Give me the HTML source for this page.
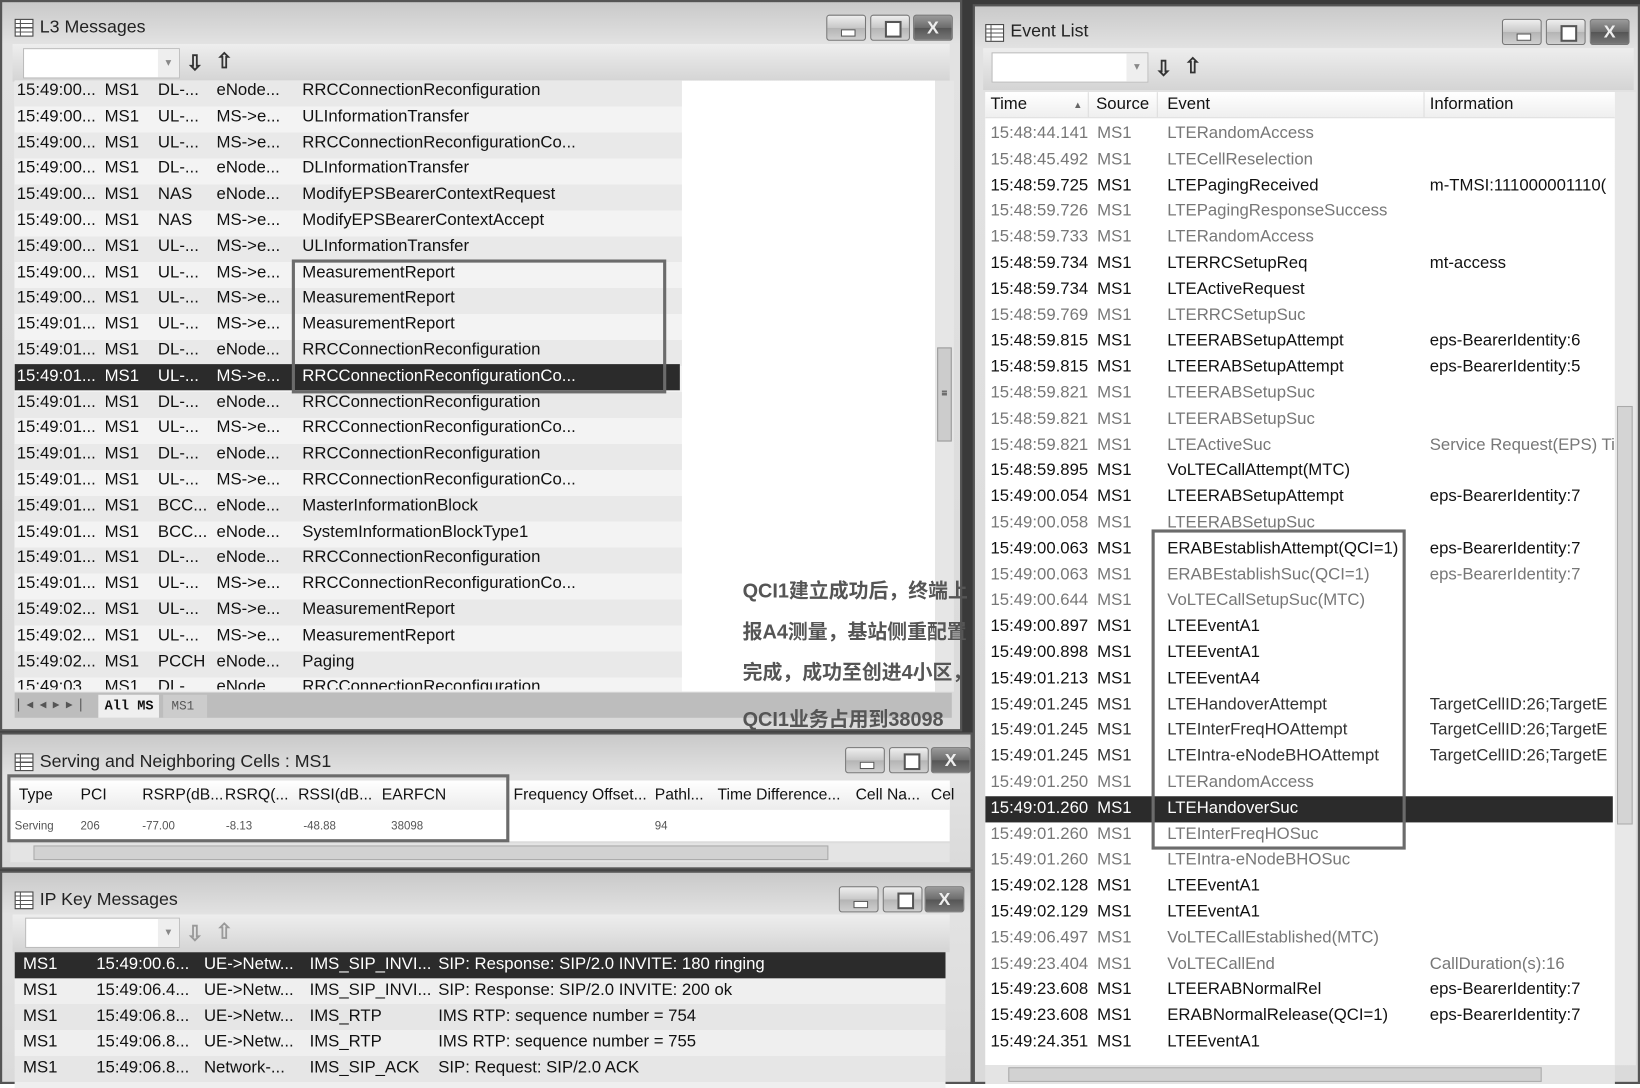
<!DOCTYPE html>
<html><head><meta charset="utf-8"><style>
*{margin:0;padding:0;box-sizing:border-box}
html,body{width:1640px;height:1084px;overflow:hidden;background:#fff}
#w{position:absolute;left:0;top:0;width:1568px;height:1036px;transform:scale(1.04592,1.04633);transform-origin:0 0;background:#3a3a3a;font-family:"Liberation Sans",sans-serif;font-size:16px;color:#111}
.a{position:absolute}
.pan{position:absolute;background:linear-gradient(#c9c9c9,#e2e2e2 40px,#dadada);border:2px solid #555}
.tt{position:absolute;font-size:17px;color:#222;white-space:nowrap}
.ico{position:absolute;width:18px;height:17px;border:1px solid #444;background:repeating-linear-gradient(#fff 0 3px,#555 3px 4px);}
.ico:after{content:"";position:absolute;left:4px;top:0;bottom:0;width:1px;background:#555}
.btn{position:absolute;width:38px;height:25px;border:1px solid #777;border-radius:3px;background:linear-gradient(#eee,#c8c8c8 50%,#b4b4b4 51%,#cfcfcf)}
.btn.x{background:linear-gradient(#9a9a9a,#6c6c6c 50%,#555 51%,#777);color:#eee;font-weight:bold;font-size:17px;text-align:center;line-height:23px}
.btn.mn:after{content:"";position:absolute;left:13px;top:13px;width:12px;height:5px;background:#fff;border:1px solid #555}
.btn.mx:after{content:"";position:absolute;left:13px;top:5px;width:12px;height:12px;background:#fff;border:2px solid #555}
.cb{position:absolute;height:29px;background:#fff;border:1px solid #bbb}
.cb:after{content:"▾";position:absolute;right:0;top:0;width:20px;height:100%;background:#eee;color:#888;font-size:11px;text-align:center;line-height:27px}
.ar{position:absolute;font-size:20px;color:#333;font-weight:bold}
.r{position:absolute;left:0;height:24.8px;line-height:24.8px;white-space:nowrap}
.r span{position:absolute;top:0}
.sel{background:#2b2b2b;color:#fff}
.g{color:#777}
.box{position:absolute;border:3px solid #6b6b6b}
.ann{position:absolute;font-family:"Liberation Sans","Noto Sans CJK SC",sans-serif;font-weight:bold;color:#555;font-size:19px;white-space:nowrap}
</style></head><body><div id="w">

<!-- L3 Messages -->
<div class="pan" style="left:0;top:0;width:920px;height:699px">
<div class="ico" style="left:12px;top:16px"></div>
<div class="tt" style="left:36px;top:14px">L3 Messages</div>
<div class="btn mn" style="left:788px;top:12px"></div><div class="btn mx" style="left:830px;top:12px"></div><div class="btn x" style="left:871px;top:12px">X</div>
<div class="a" style="left:10px;top:40px;width:896px;height:36px;background:linear-gradient(#eee,#d4d4d4)"></div>
<div class="cb" style="left:20px;top:44px;width:150px"></div>
<div class="ar" style="left:176px;top:46px">⇩</div><div class="ar" style="left:204px;top:44px">⇧</div>
<div class="a" style="left:12px;top:75px;width:880px;height:584px;background:#fff;overflow:hidden">
<div class="a" style="left:0;top:0;width:638px;height:584px;background:repeating-linear-gradient(#e9e9e9 0 24.8px,#f3f3f3 24.8px 49.6px)"></div>
<div id="l3"></div>
</div>
<div class="a" style="left:892px;top:75px;width:18px;height:584px;background:#e6e6e6"><div class="a" style="left:2px;top:255px;width:14px;height:90px;background:#ccc;border:1px solid #999;font-size:10px;text-align:center;line-height:88px">≡</div></div>
<div class="a" style="left:12px;top:660px;width:896px;height:24px;background:#bdbdbd"></div>
<div class="a" style="left:14px;top:663px;font-size:13px;color:#555;letter-spacing:6px">|◂◂▸▸|</div>
<div class="a" style="left:92px;top:662px;width:58px;height:22px;background:#efefef;font-family:'Liberation Mono',monospace;font-size:13px;font-weight:bold;line-height:22px;padding-left:6px">All MS</div>
<div class="a" style="left:154px;top:662px;width:42px;height:22px;background:#ccc;font-family:'Liberation Mono',monospace;font-size:12px;line-height:22px;padding-left:8px;color:#555">MS1</div>
</div>

<!-- Serving -->
<div class="pan" style="left:0;top:700px;width:930px;height:131px">
<div class="ico" style="left:12px;top:18px"></div>
<div class="tt" style="left:36px;top:16px">Serving and Neighboring Cells : MS1</div>
<div class="btn mn" style="left:806px;top:12px"></div><div class="btn mx" style="left:848px;top:12px"></div><div class="btn x" style="left:888px;top:12px">X</div>
<div class="a" style="left:8px;top:44px;width:898px;height:58px;background:#fff"></div>
<div class="a" style="left:8px;top:44px;width:898px;height:28px;background:linear-gradient(#fff,#ececec);font-size:15px;line-height:28px;white-space:nowrap">
<span class="a" style="left:8px">Type</span><span class="a" style="left:67px">PCI</span><span class="a" style="left:126px">RSRP(dB...</span><span class="a" style="left:205px">RSRQ(...</span><span class="a" style="left:275px">RSSI(dB...</span><span class="a" style="left:355px">EARFCN</span><span class="a" style="left:481px">Frequency Offset...</span><span class="a" style="left:616px">Pathl...</span><span class="a" style="left:676px">Time Difference...</span><span class="a" style="left:808px">Cell Na...</span><span class="a" style="left:880px">Cel</span></div>
<div class="a" style="left:8px;top:76px;width:898px;height:24px;font-size:11px;color:#555;line-height:24px;white-space:nowrap">
<span class="a" style="left:4px">Serving</span><span class="a" style="left:67px">206</span><span class="a" style="left:126px">-77.00</span><span class="a" style="left:206px">-8.13</span><span class="a" style="left:280px">-48.88</span><span class="a" style="left:364px">38098</span><span class="a" style="left:616px">94</span></div>
<div class="a" style="left:8px;top:104px;width:898px;height:18px;background:#e4e4e4"><div class="a" style="left:22px;top:2px;width:760px;height:14px;background:#d2d2d2;border:1px solid #aaa"></div></div>
</div>
<div class="box" style="left:7px;top:740px;width:480px;height:65px"></div>

<!-- IP Key -->
<div class="pan" style="left:0;top:832px;width:930px;height:204px">
<div class="ico" style="left:12px;top:18px"></div>
<div class="tt" style="left:36px;top:16px">IP Key Messages</div>
<div class="btn mn" style="left:800px;top:13px"></div><div class="btn mx" style="left:842px;top:13px"></div><div class="btn x" style="left:882px;top:13px">X</div>
<div class="a" style="left:10px;top:40px;width:896px;height:36px;background:linear-gradient(#eee,#d4d4d4)"></div>
<div class="cb" style="left:22px;top:43px;width:148px"></div>
<div class="ar" style="left:176px;top:46px;color:#999">⇩</div><div class="ar" style="left:204px;top:44px;color:#999">⇧</div>
<div class="a" style="left:12px;top:76px;width:890px;height:130px;background:repeating-linear-gradient(#e6e6e6 0 24.8px,#efefef 24.8px 49.6px);overflow:hidden">
<div class="r sel" style="top:0;width:890px"><span style="left:8px">MS1</span><span style="left:78px">15:49:00.6...</span><span style="left:181px">UE-&gt;Netw...</span><span style="left:282px">IMS_SIP_INVI...</span><span style="left:405px">SIP: Response: SIP/2.0 INVITE: 180 ringing</span></div>
<div class="r" style="top:24.8px"><span style="left:8px">MS1</span><span style="left:78px">15:49:06.4...</span><span style="left:181px">UE-&gt;Netw...</span><span style="left:282px">IMS_SIP_INVI...</span><span style="left:405px">SIP: Response: SIP/2.0 INVITE: 200 ok</span></div>
<div class="r" style="top:49.6px"><span style="left:8px">MS1</span><span style="left:78px">15:49:06.8...</span><span style="left:181px">UE-&gt;Netw...</span><span style="left:282px">IMS_RTP</span><span style="left:405px">IMS RTP: sequence number = 754</span></div>
<div class="r" style="top:74.4px"><span style="left:8px">MS1</span><span style="left:78px">15:49:06.8...</span><span style="left:181px">UE-&gt;Netw...</span><span style="left:282px">IMS_RTP</span><span style="left:405px">IMS RTP: sequence number = 755</span></div>
<div class="r" style="top:99.2px"><span style="left:8px">MS1</span><span style="left:78px">15:49:06.8...</span><span style="left:181px">Network-...</span><span style="left:282px">IMS_SIP_ACK</span><span style="left:405px">SIP: Request: SIP/2.0 ACK</span></div>
</div>
</div>

<!-- Event List -->
<div class="pan" style="left:930px;top:4px;width:638px;height:1032px">
<div class="ico" style="left:10px;top:17px"></div>
<div class="tt" style="left:34px;top:14px">Event List</div>
<div class="btn mn" style="left:504px;top:12px"></div><div class="btn mx" style="left:546px;top:12px"></div><div class="btn x" style="left:588px;top:12px">X</div>
<div class="a" style="left:8px;top:40px;width:622px;height:40px;background:linear-gradient(#eee,#d4d4d4)"></div>
<div class="cb" style="left:16px;top:44px;width:150px"></div>
<div class="ar" style="left:172px;top:47px">⇩</div><div class="ar" style="left:200px;top:45px">⇧</div>
<div class="a" style="left:10px;top:82px;width:602px;height:930px;background:#fff;overflow:hidden">
<div class="a" style="left:0;top:0;width:602px;height:25px;background:linear-gradient(#fff,#efefef);border-bottom:1px solid #ddd;white-space:nowrap;line-height:24px">
<span class="a" style="left:5px">Time</span><span class="a" style="left:84px;font-size:9px;color:#666">▲</span><span class="a" style="left:98px;top:0;width:1px;height:24px;background:#ddd"></span><span class="a" style="left:106px">Source</span><span class="a" style="left:164px;top:0;width:1px;height:24px;background:#ddd"></span><span class="a" style="left:174px">Event</span><span class="a" style="left:419px;top:0;width:1px;height:24px;background:#ddd"></span><span class="a" style="left:425px">Information</span></div>
<div id="ev" class="a" style="left:0;top:28px;width:600px">
<div class="r g" style="top:0"><span style="left:5px">15:48:44.141</span><span style="left:107px">MS1</span><span style="left:174px">LTERandomAccess</span></div>
<div class="r g" style="top:24.8px"><span style="left:5px">15:48:45.492</span><span style="left:107px">MS1</span><span style="left:174px">LTECellReselection</span></div>
<div class="r" style="top:49.6px"><span style="left:5px">15:48:59.725</span><span style="left:107px">MS1</span><span style="left:174px">LTEPagingReceived</span><span style="left:425px">m-TMSI:111000001110(</span></div>
<div class="r g" style="top:74.4px"><span style="left:5px">15:48:59.726</span><span style="left:107px">MS1</span><span style="left:174px">LTEPagingResponseSuccess</span></div>
<div class="r g" style="top:99.2px"><span style="left:5px">15:48:59.733</span><span style="left:107px">MS1</span><span style="left:174px">LTERandomAccess</span></div>
<div class="r" style="top:124px"><span style="left:5px">15:48:59.734</span><span style="left:107px">MS1</span><span style="left:174px">LTERRCSetupReq</span><span style="left:425px">mt-access</span></div>
<div class="r" style="top:148.8px"><span style="left:5px">15:48:59.734</span><span style="left:107px">MS1</span><span style="left:174px">LTEActiveRequest</span></div>
<div class="r g" style="top:173.6px"><span style="left:5px">15:48:59.769</span><span style="left:107px">MS1</span><span style="left:174px">LTERRCSetupSuc</span></div>
<div class="r" style="top:198.4px"><span style="left:5px">15:48:59.815</span><span style="left:107px">MS1</span><span style="left:174px">LTEERABSetupAttempt</span><span style="left:425px">eps-BearerIdentity:6</span></div>
<div class="r" style="top:223.2px"><span style="left:5px">15:48:59.815</span><span style="left:107px">MS1</span><span style="left:174px">LTEERABSetupAttempt</span><span style="left:425px">eps-BearerIdentity:5</span></div>
<div class="r g" style="top:248px"><span style="left:5px">15:48:59.821</span><span style="left:107px">MS1</span><span style="left:174px">LTEERABSetupSuc</span></div>
<div class="r g" style="top:272.8px"><span style="left:5px">15:48:59.821</span><span style="left:107px">MS1</span><span style="left:174px">LTEERABSetupSuc</span></div>
<div class="r g" style="top:297.6px"><span style="left:5px">15:48:59.821</span><span style="left:107px">MS1</span><span style="left:174px">LTEActiveSuc</span><span style="left:425px">Service Request(EPS) Ti</span></div>
<div class="r" style="top:322.4px"><span style="left:5px">15:48:59.895</span><span style="left:107px">MS1</span><span style="left:174px">VoLTECallAttempt(MTC)</span></div>
<div class="r" style="top:347.2px"><span style="left:5px">15:49:00.054</span><span style="left:107px">MS1</span><span style="left:174px">LTEERABSetupAttempt</span><span style="left:425px">eps-BearerIdentity:7</span></div>
<div class="r g" style="top:372px"><span style="left:5px">15:49:00.058</span><span style="left:107px">MS1</span><span style="left:174px">LTEERABSetupSuc</span></div>
<div class="r" style="top:396.8px"><span style="left:5px">15:49:00.063</span><span style="left:107px">MS1</span><span style="left:174px">ERABEstablishAttempt(QCI=1)</span><span style="left:425px">eps-BearerIdentity:7</span></div>
<div class="r g" style="top:421.6px"><span style="left:5px">15:49:00.063</span><span style="left:107px">MS1</span><span style="left:174px">ERABEstablishSuc(QCI=1)</span><span style="left:425px">eps-BearerIdentity:7</span></div>
<div class="r g" style="top:446.4px"><span style="left:5px">15:49:00.644</span><span style="left:107px">MS1</span><span style="left:174px">VoLTECallSetupSuc(MTC)</span></div>
<div class="r" style="top:471.2px"><span style="left:5px">15:49:00.897</span><span style="left:107px">MS1</span><span style="left:174px">LTEEventA1</span></div>
<div class="r" style="top:496px"><span style="left:5px">15:49:00.898</span><span style="left:107px">MS1</span><span style="left:174px">LTEEventA1</span></div>
<div class="r" style="top:520.8px"><span style="left:5px">15:49:01.213</span><span style="left:107px">MS1</span><span style="left:174px">LTEEventA4</span></div>
<div class="r" style="top:545.6px;color:#333"><span style="left:5px">15:49:01.245</span><span style="left:107px">MS1</span><span style="left:174px">LTEHandoverAttempt</span><span style="left:425px">TargetCellID:26;TargetE</span></div>
<div class="r" style="top:570.4px;color:#333"><span style="left:5px">15:49:01.245</span><span style="left:107px">MS1</span><span style="left:174px">LTEInterFreqHOAttempt</span><span style="left:425px">TargetCellID:26;TargetE</span></div>
<div class="r" style="top:595.2px;color:#333"><span style="left:5px">15:49:01.245</span><span style="left:107px">MS1</span><span style="left:174px">LTEIntra-eNodeBHOAttempt</span><span style="left:425px">TargetCellID:26;TargetE</span></div>
<div class="r g" style="top:620px"><span style="left:5px">15:49:01.250</span><span style="left:107px">MS1</span><span style="left:174px">LTERandomAccess</span></div>
<div class="r sel" style="top:644.8px;width:600px"><span style="left:5px">15:49:01.260</span><span style="left:107px">MS1</span><span style="left:174px">LTEHandoverSuc</span></div>
<div class="r g" style="top:669.6px"><span style="left:5px">15:49:01.260</span><span style="left:107px">MS1</span><span style="left:174px">LTEInterFreqHOSuc</span></div>
<div class="r g" style="top:694.4px"><span style="left:5px">15:49:01.260</span><span style="left:107px">MS1</span><span style="left:174px">LTEIntra-eNodeBHOSuc</span></div>
<div class="r" style="top:719.2px"><span style="left:5px">15:49:02.128</span><span style="left:107px">MS1</span><span style="left:174px">LTEEventA1</span></div>
<div class="r" style="top:744px"><span style="left:5px">15:49:02.129</span><span style="left:107px">MS1</span><span style="left:174px">LTEEventA1</span></div>
<div class="r g" style="top:768.8px"><span style="left:5px">15:49:06.497</span><span style="left:107px">MS1</span><span style="left:174px">VoLTECallEstablished(MTC)</span></div>
<div class="r g" style="top:793.6px"><span style="left:5px">15:49:23.404</span><span style="left:107px">MS1</span><span style="left:174px">VoLTECallEnd</span><span style="left:425px">CallDuration(s):16</span></div>
<div class="r" style="top:818.4px"><span style="left:5px">15:49:23.608</span><span style="left:107px">MS1</span><span style="left:174px">LTEERABNormalRel</span><span style="left:425px">eps-BearerIdentity:7</span></div>
<div class="r" style="top:843.2px"><span style="left:5px">15:49:23.608</span><span style="left:107px">MS1</span><span style="left:174px">ERABNormalRelease(QCI=1)</span><span style="left:425px">eps-BearerIdentity:7</span></div>
<div class="r" style="top:868px"><span style="left:5px">15:49:24.351</span><span style="left:107px">MS1</span><span style="left:174px">LTEEventA1</span></div>
</div>
</div>
<div class="a" style="left:612px;top:82px;width:20px;height:930px;background:#e8e8e8"><div class="a" style="left:2px;top:300px;width:15px;height:400px;background:#d4d4d4;border:1px solid #aaa"></div></div>
<div class="a" style="left:10px;top:1012px;width:602px;height:18px;background:#e4e4e4"><div class="a" style="left:22px;top:2px;width:510px;height:14px;background:#d2d2d2;border:1px solid #aaa"></div></div>
</div>
<div class="box" style="left:1101px;top:506px;width:243px;height:306px"></div>

<!-- L3 rows -->
<div class="a" style="left:14px;top:75px;width:878px;height:584px;overflow:hidden">
<div class="r" style="top:0"><span style="left:2px">15:49:00...</span><span style="left:86px">MS1</span><span style="left:137px">DL-...</span><span style="left:193px">eNode...</span><span style="left:275px">RRCConnectionReconfiguration</span></div>
<div class="r" style="top:24.8px"><span style="left:2px">15:49:00...</span><span style="left:86px">MS1</span><span style="left:137px">UL-...</span><span style="left:193px">MS-&gt;e...</span><span style="left:275px">ULInformationTransfer</span></div>
<div class="r" style="top:49.6px"><span style="left:2px">15:49:00...</span><span style="left:86px">MS1</span><span style="left:137px">UL-...</span><span style="left:193px">MS-&gt;e...</span><span style="left:275px">RRCConnectionReconfigurationCo...</span></div>
<div class="r" style="top:74.4px"><span style="left:2px">15:49:00...</span><span style="left:86px">MS1</span><span style="left:137px">DL-...</span><span style="left:193px">eNode...</span><span style="left:275px">DLInformationTransfer</span></div>
<div class="r" style="top:99.2px"><span style="left:2px">15:49:00...</span><span style="left:86px">MS1</span><span style="left:137px">NAS</span><span style="left:193px">eNode...</span><span style="left:275px">ModifyEPSBearerContextRequest</span></div>
<div class="r" style="top:124px"><span style="left:2px">15:49:00...</span><span style="left:86px">MS1</span><span style="left:137px">NAS</span><span style="left:193px">MS-&gt;e...</span><span style="left:275px">ModifyEPSBearerContextAccept</span></div>
<div class="r" style="top:148.8px"><span style="left:2px">15:49:00...</span><span style="left:86px">MS1</span><span style="left:137px">UL-...</span><span style="left:193px">MS-&gt;e...</span><span style="left:275px">ULInformationTransfer</span></div>
<div class="r" style="top:173.6px"><span style="left:2px">15:49:00...</span><span style="left:86px">MS1</span><span style="left:137px">UL-...</span><span style="left:193px">MS-&gt;e...</span><span style="left:275px">MeasurementReport</span></div>
<div class="r" style="top:198.4px"><span style="left:2px">15:49:00...</span><span style="left:86px">MS1</span><span style="left:137px">UL-...</span><span style="left:193px">MS-&gt;e...</span><span style="left:275px">MeasurementReport</span></div>
<div class="r" style="top:223.2px"><span style="left:2px">15:49:01...</span><span style="left:86px">MS1</span><span style="left:137px">UL-...</span><span style="left:193px">MS-&gt;e...</span><span style="left:275px">MeasurementReport</span></div>
<div class="r" style="top:248px"><span style="left:2px">15:49:01...</span><span style="left:86px">MS1</span><span style="left:137px">DL-...</span><span style="left:193px">eNode...</span><span style="left:275px">RRCConnectionReconfiguration</span></div>
<div class="r sel" style="top:272.8px;width:636px"><span style="left:2px">15:49:01...</span><span style="left:86px">MS1</span><span style="left:137px">UL-...</span><span style="left:193px">MS-&gt;e...</span><span style="left:275px">RRCConnectionReconfigurationCo...</span></div>
<div class="r" style="top:297.6px"><span style="left:2px">15:49:01...</span><span style="left:86px">MS1</span><span style="left:137px">DL-...</span><span style="left:193px">eNode...</span><span style="left:275px">RRCConnectionReconfiguration</span></div>
<div class="r" style="top:322.4px"><span style="left:2px">15:49:01...</span><span style="left:86px">MS1</span><span style="left:137px">UL-...</span><span style="left:193px">MS-&gt;e...</span><span style="left:275px">RRCConnectionReconfigurationCo...</span></div>
<div class="r" style="top:347.2px"><span style="left:2px">15:49:01...</span><span style="left:86px">MS1</span><span style="left:137px">DL-...</span><span style="left:193px">eNode...</span><span style="left:275px">RRCConnectionReconfiguration</span></div>
<div class="r" style="top:372px"><span style="left:2px">15:49:01...</span><span style="left:86px">MS1</span><span style="left:137px">UL-...</span><span style="left:193px">MS-&gt;e...</span><span style="left:275px">RRCConnectionReconfigurationCo...</span></div>
<div class="r" style="top:396.8px"><span style="left:2px">15:49:01...</span><span style="left:86px">MS1</span><span style="left:137px">BCC...</span><span style="left:193px">eNode...</span><span style="left:275px">MasterInformationBlock</span></div>
<div class="r" style="top:421.6px"><span style="left:2px">15:49:01...</span><span style="left:86px">MS1</span><span style="left:137px">BCC...</span><span style="left:193px">eNode...</span><span style="left:275px">SystemInformationBlockType1</span></div>
<div class="r" style="top:446.4px"><span style="left:2px">15:49:01...</span><span style="left:86px">MS1</span><span style="left:137px">DL-...</span><span style="left:193px">eNode...</span><span style="left:275px">RRCConnectionReconfiguration</span></div>
<div class="r" style="top:471.2px"><span style="left:2px">15:49:01...</span><span style="left:86px">MS1</span><span style="left:137px">UL-...</span><span style="left:193px">MS-&gt;e...</span><span style="left:275px">RRCConnectionReconfigurationCo...</span></div>
<div class="r" style="top:496px"><span style="left:2px">15:49:02...</span><span style="left:86px">MS1</span><span style="left:137px">UL-...</span><span style="left:193px">MS-&gt;e...</span><span style="left:275px">MeasurementReport</span></div>
<div class="r" style="top:520.8px"><span style="left:2px">15:49:02...</span><span style="left:86px">MS1</span><span style="left:137px">UL-...</span><span style="left:193px">MS-&gt;e...</span><span style="left:275px">MeasurementReport</span></div>
<div class="r" style="top:545.6px"><span style="left:2px">15:49:02...</span><span style="left:86px">MS1</span><span style="left:137px">PCCH</span><span style="left:193px">eNode...</span><span style="left:275px">Paging</span></div>
<div class="r" style="top:570.4px"><span style="left:2px">15:49:03...</span><span style="left:86px">MS1</span><span style="left:137px">DL-...</span><span style="left:193px">eNode...</span><span style="left:275px">RRCConnectionReconfiguration</span></div>
</div>
<div class="box" style="left:279px;top:248px;width:358px;height:128px"></div>

<div class="a" style="left:700px;top:540px;width:242px;height:160px;overflow:hidden">
<div class="ann" style="left:10px;top:10px">QCI1建立成功后，终端上</div>
<div class="ann" style="left:10px;top:49px">报A4测量，基站侧重配置</div>
<div class="ann" style="left:10px;top:88px">完成，成功至创进4小区，</div>
<div class="ann" style="left:10px;top:133px">QCI1业务占用到38098</div>
</div>
</div></body></html>
